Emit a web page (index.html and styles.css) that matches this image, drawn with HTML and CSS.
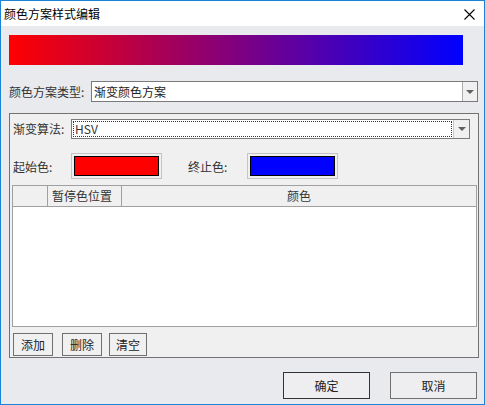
FILE: index.html
```html
<!DOCTYPE html>
<html>
	<head>
		<meta charset="utf-8">
		<title>颜色方案样式编辑</title>
		<link rel="stylesheet" href="styles.css">
	</head>
	<body>
		<div class="window">
			<div class="titlebar">
				<span class="title">颜色方案样式编辑</span>
				<svg class="close" width="11" height="11" viewBox="0 0 11 11">
					<path d="M0.5 0.5 L10.5 10.5 M10.5 0.5 L0.5 10.5" stroke="#000" stroke-width="1.1" fill="none"/>
				</svg>
			</div>
			<div class="content">
				<div class="preview"></div>

				<div class="row scheme">
					<span class="label">颜色方案类型:</span>
					<div class="combo combo-scheme">
						<span class="combo-text">渐变颜色方案</span>
						<span class="combo-btn"><i class="arrow"></i></span>
					</div>
				</div>

				<div class="group">
					<div class="row algo">
						<span class="label">渐变算法:</span>
						<div class="combo combo-algo">
							<span class="combo-text focus">HSV</span>
							<span class="combo-btn"><i class="arrow"></i></span>
						</div>
					</div>

					<div class="row colors">
						<span class="label">起始色:</span>
						<div class="swatch"><div class="swatch-fill red"></div></div>
						<span class="label end-label">终止色:</span>
						<div class="swatch"><div class="swatch-fill blue"></div></div>
					</div>

					<div class="grid">
						<div class="grid-head">
							<div class="col col-idx"></div>
							<div class="col col-pos">暂停色位置</div>
							<div class="col col-color">颜色</div>
						</div>
						<div class="grid-body"></div>
					</div>

					<div class="row tools">
						<button class="btn small">添加</button>
						<button class="btn small">删除</button>
						<button class="btn small">清空</button>
					</div>
				</div>

				<div class="row footer">
					<button class="btn big default">确定</button>
					<button class="btn big">取消</button>
				</div>
			</div>
		</div>
	</body>
</html>
```

FILE: styles.css
```css
* {
    box-sizing: border-box;
}
body {
    margin: 0;
    font-family: "Noto Sans CJK SC", "Noto Sans", sans-serif;
    font-size: 12px;
    color: #333;
}
.window {
    width: 485px;
    height: 405px;
    border: 1px solid #1883d7;
    display: flex;
    flex-direction: column;
}
.titlebar {
    height: 25px;
    background: #fff;
    display: flex;
    align-items: center;
    justify-content: space-between;
    padding: 0 9px 0 3px;
}
.title {
    color: #000;
    font-size: 12px;
}
.close {
    display: block;
    margin-top: 1px;
}
.content {
    flex: 1;
    background: #e9eaee;
    padding: 9px 6px 0 8px;
}
.preview {
    width: 454px;
    height: 30px;
    background: linear-gradient(to right, #ff0000, #0000ff);
}
.row {
    display: flex;
    align-items: center;
}
.label {
    white-space: nowrap;
    line-height: 16px;
}
.scheme {
    margin-top: 16px;
}
.scheme .label {
    width: 82px;
}
.combo {
    display: flex;
    height: 21px;
    border: 1px solid #7a7a7a;
    background: #fff;
}
.combo-text {
    flex: 1;
    padding-left: 2px;
    line-height: 19px;
    color: #222;
}
.combo-btn {
    width: 15px;
    border-left: 1px solid #adadad;
    background: #f0f0f0;
    display: flex;
    align-items: center;
    justify-content: center;
}
.arrow {
    width: 0;
    height: 0;
    border-left: 4px solid transparent;
    border-right: 4px solid transparent;
    border-top: 4px solid #606060;
}
.combo-scheme {
    width: 387px;
}
.group {
    margin-top: 11px;
    width: 470px;
    height: 245px;
    border: 1px solid #727272;
    background: #f0f0f0;
    padding: 5px 1px 0 3px;
}
.algo .label {
    width: 58px;
}
.combo-algo {
    width: 399px;
    height: 20px;
}
.combo-algo .combo-text {
    margin: 1px;
    border: 1px dotted #333;
    line-height: 14px;
    padding-left: 1px;
    color: #333;
}
.combo-algo .combo-btn {
    width: 16px;
    border-left-color: #c8c8c8;
}
.colors {
    margin-top: 14px;
}
.colors .label {
    width: 58px;
    padding-top: 2px;
}
.colors .end-label {
    width: 59px;
    margin-left: 26px;
}
.swatch {
    width: 91px;
    height: 26px;
    border: 1px solid #c4c4c4;
    padding: 2px;
}
.swatch-fill {
    height: 100%;
    border: 1px solid #000;
}
.red {
    background: #ff0000;
}
.blue {
    background: #0000ff;
}
.grid {
    margin-top: 6px;
    margin-left: -1px;
    width: 465px;
    height: 142px;
    border: 1px solid #a0a0a0;
    display: flex;
    flex-direction: column;
}
.grid-head {
    display: flex;
    height: 21px;
    border-bottom: 1px solid #a0a0a0;
    background: #f0f0f0;
}
.col {
    line-height: 20px;
    color: #333;
}
.col-idx {
    width: 35px;
    border-right: 1px solid #a0a0a0;
}
.col-pos {
    width: 74px;
    border-right: 1px solid #a0a0a0;
    padding-left: 4px;
}
.col-color {
    flex: 1;
    text-align: center;
}
.grid-body {
    flex: 1;
    background: #fff;
}
.btn {
    font-family: inherit;
    font-size: 12px;
    color: #222;
    background: #f0f0f0;
    border: 1px solid #707070;
    padding: 0;
    margin: 0;
}
.tools {
    margin-top: 6px;
}
.small {
    height: 23px;
    width: 40px;
    margin-right: 9px;
}
.small:last-child {
    width: 38px;
    margin-left: -2px;
}
.footer {
    margin-top: 14px;
    justify-content: flex-end;
    gap: 20px;
    padding-right: 1px;
}
.big {
    width: 87px;
    height: 27px;
    background: #eeeef0;
}
.default {
    border-color: #333;
}
```
